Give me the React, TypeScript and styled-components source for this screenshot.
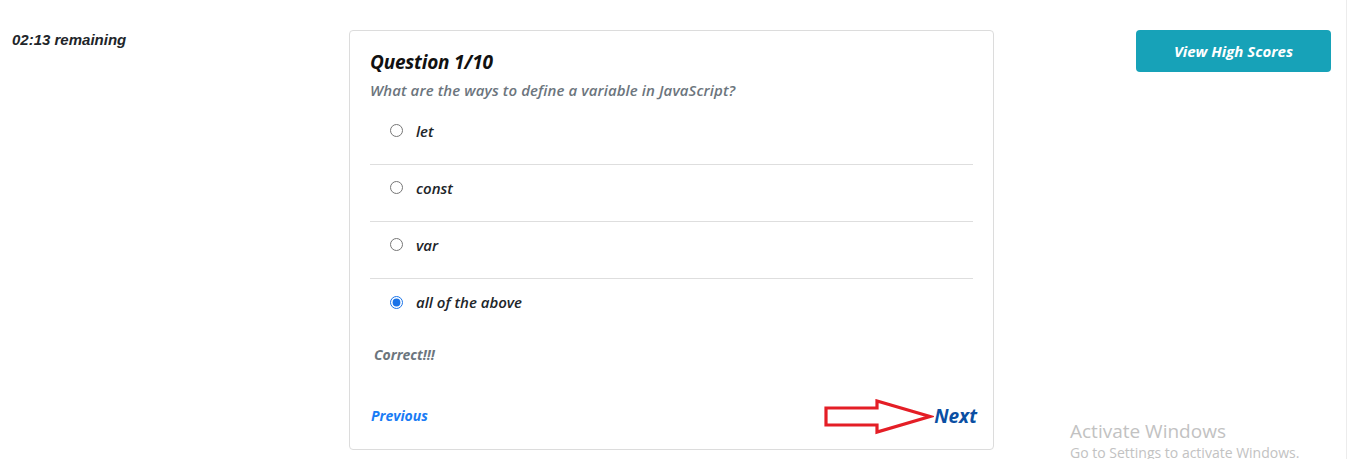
import React, { useState } from "react";
import styled, { createGlobalStyle } from "styled-components";

const Global = createGlobalStyle`
  html, body { margin: 0; padding: 0; background: #fff; }
  body { font-family: "Open Sans", "Liberation Sans", sans-serif; overflow: hidden; }
  * { box-sizing: border-box; }
`;

const Page = styled.div`
  position: relative;
  width: 1347px;
  height: 459px;
  display: flex;
  align-items: flex-start;
  padding-top: 30px;
  border-right: 1px solid #ececec;
`;

const TimerCol = styled.div`
  width: 349px;
  padding-left: 12px;
  padding-top: 1px;
`;

const Timer = styled.div`
  font-family: "Liberation Sans", Arial, sans-serif;
  font-style: italic;
  font-weight: 700;
  font-size: 15px;
  line-height: 18px;
  color: #212529;
`;

const Card = styled.div`
  position: relative;
  width: 645px;
  border: 1px solid #dcdcdc;
  border-radius: 4px;
  padding: 19px 20px 22px 20px;
  font-family: "Open Sans", sans-serif;
  font-style: italic;
`;

const Title = styled.h2`
  margin: 0;
  font-size: 19px;
  line-height: 24px;
  font-weight: 700;
  color: #111;
  letter-spacing: -0.2px;
`;

const QuestionText = styled.p`
  margin: 5px 0 0;
  font-size: 15px;
  line-height: 22px;
  font-weight: 600;
  color: #6c757d;
  letter-spacing: 0.1px;
`;

const Options = styled.div`
  margin-top: 7px;
`;

const OptionRow = styled.label<{ $last?: boolean }>`
  display: flex;
  align-items: center;
  gap: 13px;
  height: 57px;
  padding: 0 0 11px 20px;
  border-bottom: ${(p) => (p.$last ? "none" : "1px solid #dedede")};
  font-size: 15px;
  font-weight: 600;
  color: #212529;
  cursor: pointer;
`;

const Radio = styled.input`
  margin: 0;
  width: 13px;
  height: 13px;
  accent-color: #1a73e8;
`;

const Feedback = styled.div`
  margin-top: 8px;
  padding-left: 4px;
  font-size: 14px;
  line-height: 22px;
  font-weight: 700;
  color: #6c757d;
`;

const Footer = styled.div`
  margin-top: 38px;
  display: flex;
  justify-content: space-between;
  align-items: center;
  height: 23px;
`;

const PrevLink = styled.a`
  font-size: 14px;
  font-weight: 700;
  color: #1a7cf5;
  text-decoration: none;
  padding-left: 1px;
`;

const NextLink = styled.a`
  font-size: 19px;
  font-weight: 700;
  color: #0b4fa3;
  text-decoration: none;
  margin-right: -4px;
`;

const Arrow = styled.svg`
  position: absolute;
  left: 474px;
  top: 368px;
`;

const RightCol = styled.div`
  flex: 1;
  display: flex;
  justify-content: flex-end;
  padding-right: 15px;
`;

const ScoresButton = styled.button`
  width: 195px;
  height: 42px;
  border: none;
  border-radius: 4px;
  background: #17a2b8;
  color: #fff;
  font-family: "Open Sans", sans-serif;
  font-style: italic;
  font-weight: 700;
  font-size: 15px;
  cursor: pointer;
`;

const Watermark = styled.div`
  position: absolute;
  left: 1070px;
  top: 419px;
  font-family: "Open Sans", "Noto Sans", sans-serif;
  color: #c2c2c2;
  pointer-events: none;
`;

const WmTitle = styled.div`
  font-size: 19px;
  line-height: 24px;
`;

const WmSub = styled.div`
  font-size: 14px;
  line-height: 19px;
`;

const options = ["let", "const", "var", "all of the above"];

export default function App() {
  const [selected, setSelected] = useState(3);
  return (
    <>
      <Global />
      <Page>
        <TimerCol>
          <Timer>02:13 remaining</Timer>
        </TimerCol>
        <Card>
          <Title>Question 1/10</Title>
          <QuestionText>What are the ways to define a variable in JavaScript?</QuestionText>
          <Options>
            {options.map((o, i) => (
              <OptionRow key={o} $last={i === options.length - 1}>
                <Radio
                  type="radio"
                  name="answer"
                  checked={selected === i}
                  onChange={() => setSelected(i)}
                />
                {o}
              </OptionRow>
            ))}
          </Options>
          <Feedback>Correct!!!</Feedback>
          <Footer>
            <PrevLink href="#">Previous</PrevLink>
            <NextLink href="#">Next</NextLink>
          </Footer>
          <Arrow width="110" height="36" viewBox="0 0 110 36">
            <path
              d="M2 9 H53 V2 L106 17.5 L53 33 V26 H2 Z"
              fill="none"
              stroke="#e41e26"
              strokeWidth="3.2"
              strokeLinejoin="miter"
            />
          </Arrow>
        </Card>
        <RightCol>
          <ScoresButton>View High Scores</ScoresButton>
        </RightCol>
        <Watermark>
          <WmTitle>Activate Windows</WmTitle>
          <WmSub>Go to Settings to activate Windows.</WmSub>
        </Watermark>
      </Page>
    </>
  );
}
